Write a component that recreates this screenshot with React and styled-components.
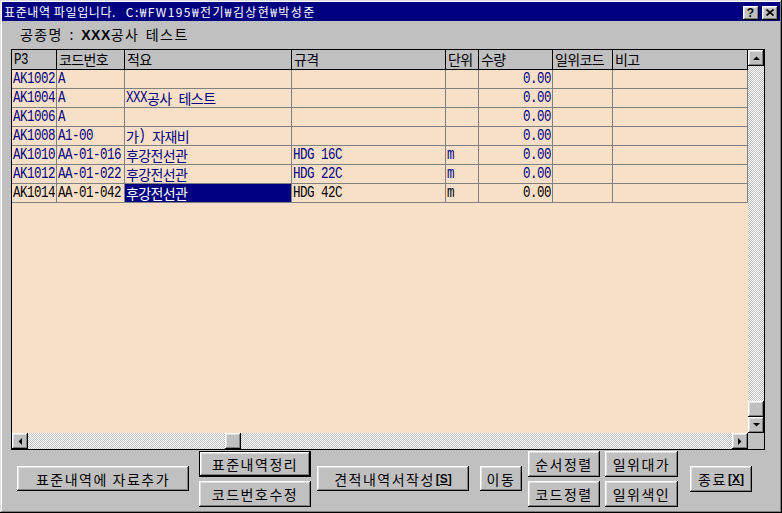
import React from "react";
import styled, { createGlobalStyle } from "styled-components";

const GlobalStyle = createGlobalStyle`
  html, body {
    margin: 0;
    padding: 0;
    background: #c0c0c0;
  }
  * {
    box-sizing: border-box;
  }
`;

const UI_FONT = `"Noto Sans CJK KR", "Liberation Sans", sans-serif`;

const raised = `
  background: #c0c0c0;
  box-shadow: inset -1px -1px #000, inset 1px 1px #fff, inset -2px -2px #808080,
    inset 2px 2px #dfdfdf;
`;

const columns = [
  { key: "p3", title: "P3", w: 45 },
  { key: "code", title: "코드번호", w: 68 },
  { key: "desc", title: "적요", w: 167 },
  { key: "spec", title: "규격", w: 154 },
  { key: "unit", title: "단위", w: 33 },
  { key: "qty", title: "수량", w: 74, right: true },
  { key: "ilwi", title: "일위코드", w: 60 },
  { key: "note", title: "비고", w: 135 },
];

const rows = [
  { p3: "AK1002", code: "A", qty: "0.00" },
  { p3: "AK1004", code: "A", desc: "XXX공사 테스트", qty: "0.00" },
  { p3: "AK1006", code: "A", qty: "0.00" },
  { p3: "AK1008", code: "A1-00", desc: "가) 자재비", qty: "0.00" },
  { p3: "AK1010", code: "AA-01-016", desc: "후강전선관", spec: "HDG 16C", unit: "m", qty: "0.00" },
  { p3: "AK1012", code: "AA-01-022", desc: "후강전선관", spec: "HDG 22C", unit: "m", qty: "0.00" },
  { p3: "AK1014", code: "AA-01-042", desc: "후강전선관", spec: "HDG 42C", unit: "m", qty: "0.00" },
];

const CURRENT_ROW = 6;
const SELECTED_COL = "desc";

// old fixed-pitch grid font: half-width latin, full-width hangul
const GridText = ({ text }) =>
  text
    .split(/([가-힣]+)/)
    .filter(Boolean)
    .map((part, i) =>
      /[가-힣]/.test(part) ? (
        <HangulRun key={i}>{part}</HangulRun>
      ) : (
        <LatinRun key={i}>{part}</LatinRun>
      )
    );

const Arrow = ({ dir }) => {
  const pts = {
    up: "0,4 7,4 3.5,0.5",
    down: "0,0 7,0 3.5,3.5",
    left: "4,0 4,7 0.5,3.5",
    right: "0,0 0,7 3.5,3.5",
  }[dir];
  const vertical = dir === "up" || dir === "down";
  return (
    <svg width={vertical ? 7 : 4} height={vertical ? 4 : 7} viewBox={vertical ? "0 0 7 4" : "0 0 4 7"}>
      <polygon points={pts} fill="#000" />
    </svg>
  );
};

const App = () => {
  return (
    <>
      <GlobalStyle />
      <Window>
        <TitleBar>
          <TitleText>
            표준내역 파일입니다.&nbsp;&nbsp;&nbsp;<PathText>C:₩FW195₩전기₩김상현₩박성준</PathText>
          </TitleText>
          <CaptionButtons>
            <CaptionBtn>?</CaptionBtn>
            <CaptionBtn $close>
              <svg width="8" height="7" viewBox="0 0 8 7">
                <path d="M0.5 0.5 L7.5 6.5 M7.5 0.5 L0.5 6.5" stroke="#000" strokeWidth="1.6" />
              </svg>
            </CaptionBtn>
          </CaptionButtons>
        </TitleBar>

        <LabelRow>
          공종명 : <Strong>XXX</Strong>공사 테스트
        </LabelRow>

        <GridFrame>
          <Sheet>
            <HeaderRow>
              {columns.map((c) => (
                <HeaderCell key={c.key} $w={c.w}>
                  <GridText text={c.title} />
                </HeaderCell>
              ))}
            </HeaderRow>
            {rows.map((r, i) => (
              <DataRow key={r.p3}>
                {columns.map((c) => (
                  <DataCell
                    key={c.key}
                    $w={c.w}
                    $right={c.right}
                    $current={i === CURRENT_ROW}
                    $selected={i === CURRENT_ROW && c.key === SELECTED_COL}
                  >
                    <GridText text={r[c.key] || ""} />
                  </DataCell>
                ))}
              </DataRow>
            ))}
          </Sheet>

          <VScroll>
            <ScrollBtn>
              <Arrow dir="up" />
            </ScrollBtn>
            <Track />
            <Thumb />
            <ScrollBtn>
              <Arrow dir="down" />
            </ScrollBtn>
          </VScroll>

          <HScroll>
            <ScrollBtn>
              <Arrow dir="left" />
            </ScrollBtn>
            <Track $w={197} />
            <Thumb />
            <Track />
            <ScrollBtn>
              <Arrow dir="right" />
            </ScrollBtn>
          </HScroll>

          <Corner />
        </GridFrame>

        <BottomBar>
          <Button $w={172} $h={25} $ml={0}>
            표준내역에 자료추가
          </Button>
          <Stack $ml={10}>
            <Button $w={112} $h={26} $default>
              표준내역정리
            </Button>
            <Button $w={112} $h={26}>
              코드번호수정
            </Button>
          </Stack>
          <Button $w={152} $h={25} $ml={6}>
            견적내역서작성
            <Hotkey>
              [<u>S</u>]
            </Hotkey>
          </Button>
          <Button $w={42} $h={25} $ml={11}>
            이동
          </Button>
          <Stack $ml={6}>
            <Button $w={72} $h={26}>
              순서정렬
            </Button>
            <Button $w={72} $h={26}>
              코드정렬
            </Button>
          </Stack>
          <Stack $ml={5}>
            <Button $w={73} $h={26}>
              일위대가
            </Button>
            <Button $w={73} $h={26}>
              일위색인
            </Button>
          </Stack>
          <Button $w={62} $h={26} $ml={12}>
            종료
            <Hotkey>
              [<u>X</u>]
            </Hotkey>
          </Button>
        </BottomBar>
      </Window>
    </>
  );
};

export default App;

const Window = styled.div`
  width: 782px;
  height: 513px;
  padding: 2px;
  display: flex;
  flex-direction: column;
  background: #c0c0c0;
  box-shadow: inset -1px -1px #000, inset 1px 1px #dfdfdf, inset -2px -2px #808080,
    inset 2px 2px #fff;
  overflow: hidden;
`;

const TitleBar = styled.div`
  height: 19px;
  flex: none;
  display: flex;
  align-items: center;
  justify-content: space-between;
  background: #000080;
  padding: 0 2px 0 2px;
`;

const TitleText = styled.div`
  font-family: ${UI_FONT};
  font-size: 12px;
  line-height: 19px;
  letter-spacing: 0.6px;
  color: #fff;
  white-space: nowrap;
`;

const PathText = styled.span`
  letter-spacing: 1.4px;
`;

const CaptionButtons = styled.div`
  display: flex;
  gap: 3px;
  margin-top: 2px;
`;

const CaptionBtn = styled.div`
  ${raised}
  width: 16px;
  height: 14px;
  display: flex;
  align-items: center;
  justify-content: center;
  font-family: "Liberation Sans", sans-serif;
  font-weight: bold;
  font-size: 12px;
  line-height: 14px;
  color: #000;
  padding: ${(p) => (p.$close ? "0 1px 1px 0" : "0 1px 0 0")};
`;

const LabelRow = styled.div`
  height: 28px;
  flex: none;
  padding-left: 18px;
  font-family: ${UI_FONT};
  font-size: 14px;
  line-height: 26px;
  letter-spacing: 1.4px;
  word-spacing: 2px;
  color: #000;
`;

const Strong = styled.span`
  font-family: "Liberation Sans", sans-serif;
  font-weight: bold;
  letter-spacing: 0.5px;
`;

const GridFrame = styled.div`
  flex: none;
  margin-left: 9px;
  width: 754px;
  height: 401px;
  border: 1px solid #000;
  display: grid;
  grid-template-columns: 736px 16px;
  grid-template-rows: 383px 16px;
`;

const Sheet = styled.div`
  background: #f8e0c8;
  overflow: hidden;
`;

const HeaderRow = styled.div`
  display: flex;
  height: 20px;
  background: #c0c0c0;
  border-bottom: 1px solid #000;
`;

const HeaderCell = styled.div`
  width: ${(p) => p.$w}px;
  flex: none;
  display: flex;
  align-items: center;
  border-right: 1px solid #000;
  padding-left: 2px;
  color: #000;
  white-space: pre;
  overflow: hidden;
`;

const DataRow = styled.div`
  display: flex;
  height: 19px;
  border-bottom: 1px solid #808080;
`;

const DataCell = styled.div`
  width: ${(p) => p.$w}px;
  flex: none;
  display: flex;
  align-items: center;
  justify-content: ${(p) => (p.$right ? "flex-end" : "flex-start")};
  border-right: 1px solid #808080;
  padding: ${(p) => (p.$right ? "0 1px 0 0" : "0 0 0 1px")};
  background: ${(p) => (p.$selected ? "#000080" : "transparent")};
  color: ${(p) => (p.$selected ? "#fff" : p.$current ? "#000" : "#000080")};
  white-space: pre;
  overflow: hidden;
`;

const LatinRun = styled.span`
  display: inline-block;
  font-family: "Liberation Mono", monospace;
  font-size: 12.5px;
  letter-spacing: -0.5px;
  line-height: 14px;
  transform: scaleY(1.35);
`;

const HangulRun = styled.span`
  display: inline-block;
  font-family: "Noto Sans CJK KR", sans-serif;
  font-size: 14px;
  letter-spacing: -0.6px;
  line-height: 17px;
`;

const VScroll = styled.div`
  display: flex;
  flex-direction: column;
`;

const HScroll = styled.div`
  display: flex;
`;

const ScrollBtn = styled.div`
  ${raised}
  width: 16px;
  height: 16px;
  flex: none;
  display: flex;
  align-items: center;
  justify-content: center;
`;

const Track = styled.div`
  flex: ${(p) => (p.$w ? "none" : "1")};
  width: ${(p) => (p.$w ? `${p.$w}px` : "auto")};
  background: repeating-conic-gradient(#c0c0c0 0 25%, #fff 0 50%) 0 0 / 2px 2px;
`;

const Thumb = styled.div`
  ${raised}
  width: 16px;
  height: 16px;
  flex: none;
`;

const Corner = styled.div`
  background: #c0c0c0;
`;

const BottomBar = styled.div`
  flex: none;
  height: 57px;
  display: flex;
  align-items: center;
  padding-left: 15px;
`;

const Stack = styled.div`
  display: flex;
  flex-direction: column;
  gap: 4px;
  margin-left: ${(p) => p.$ml || 0}px;
`;

const Button = styled.div`
  width: ${(p) => p.$w}px;
  height: ${(p) => p.$h}px;
  flex: none;
  margin-left: ${(p) => p.$ml || 0}px;
  display: flex;
  align-items: center;
  justify-content: center;
  background: #c0c0c0;
  box-shadow: ${(p) =>
    p.$default
      ? "inset 0 0 0 1px #000, inset -2px -2px #000, inset 2px 2px #fff, inset -3px -3px #808080, inset 3px 3px #dfdfdf"
      : "inset -1px -1px #000, inset 1px 1px #fff, inset -2px -2px #808080, inset 2px 2px #dfdfdf"};
  font-family: ${UI_FONT};
  font-size: 14px;
  letter-spacing: 1.5px;
  line-height: 1;
  color: #000;
  white-space: nowrap;
`;

const Hotkey = styled.b`
  font-family: "Liberation Sans", sans-serif;
  font-size: 12px;
  letter-spacing: 0;
  margin-left: 1px;
`;
